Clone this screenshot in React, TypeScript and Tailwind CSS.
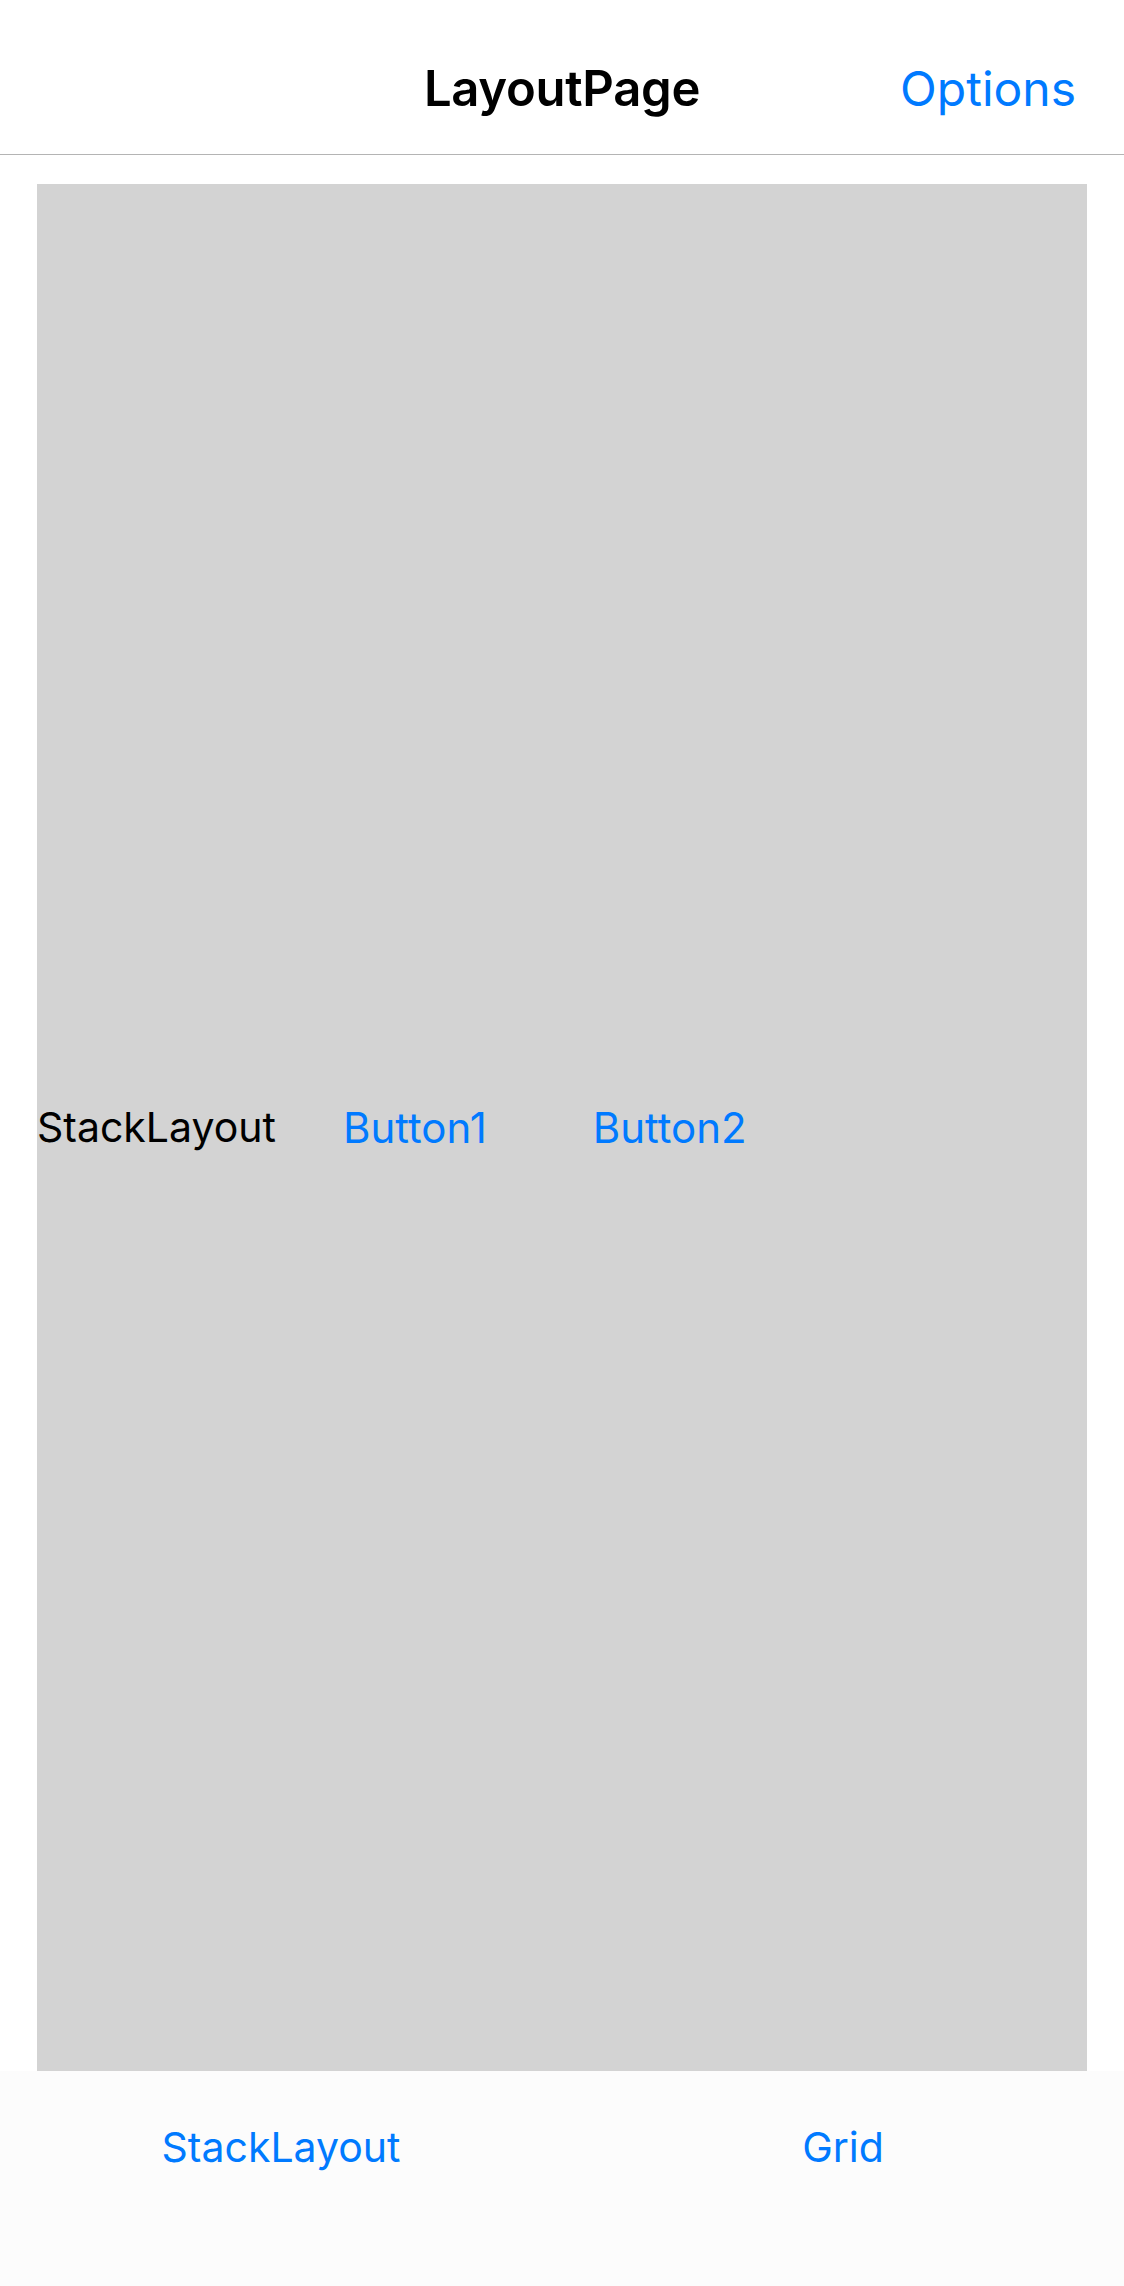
export default function App() {
	const font = { fontFamily: "Inter, 'Noto Sans', sans-serif" };

	return (
		<div className="flex h-[2286px] w-[1124px] flex-col bg-white" style={font}>
			{/* nav bar */}
			<div className="grid h-[155px] shrink-0 grid-cols-[1fr_auto_1fr] items-end border-b border-[#b4b4b4] px-[48px] pb-[41px]">
				<div />
				<div className="text-[49px] font-semibold leading-none tracking-[-0.3px] text-black">LayoutPage</div>
				<div className="justify-self-end text-[48px] leading-none text-[#007aff]">Options</div>
			</div>

			{/* content */}
			<div className="px-[37px] pt-[29px]">
				<div className="flex h-[1887px] items-center bg-[#d3d3d3]">
					<span className="text-[41px] text-black">StackLayout</span>
					<button className="ml-[67px] text-[42px] text-[#007aff]">Button1</button>
					<button className="ml-[106px] text-[42px] text-[#007aff]">Button2</button>
				</div>
			</div>

			{/* tab bar */}
			<div className="grid flex-1 grid-cols-2 bg-[#fcfcfc] pt-[56px]">
				<div className="text-center text-[41px] leading-none text-[#007aff]">StackLayout</div>
				<div className="text-center text-[41px] leading-none text-[#007aff]">Grid</div>
			</div>
		</div>
	);
}
